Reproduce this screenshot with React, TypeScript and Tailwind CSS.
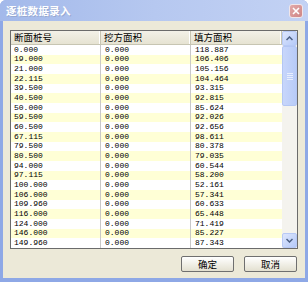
import React from 'react';

const rows: [string, string, string][] = [
  ['0.000', '0.000', '118.887'],
  ['19.000', '0.000', '106.406'],
  ['21.000', '0.000', '105.156'],
  ['22.115', '0.000', '104.464'],
  ['39.500', '0.000', '93.315'],
  ['40.500', '0.000', '92.815'],
  ['50.000', '0.000', '85.624'],
  ['59.500', '0.000', '92.026'],
  ['60.500', '0.000', '92.656'],
  ['67.115', '0.000', '98.611'],
  ['79.500', '0.000', '80.378'],
  ['80.500', '0.000', '79.035'],
  ['94.000', '0.000', '60.544'],
  ['97.115', '0.000', '58.200'],
  ['100.000', '0.000', '52.161'],
  ['106.000', '0.000', '57.341'],
  ['109.960', '0.000', '60.633'],
  ['116.000', '0.000', '65.448'],
  ['124.000', '0.000', '71.419'],
  ['146.000', '0.000', '85.227'],
  ['149.960', '0.000', '87.343'],
];

const cjk = "font-['SimSun','Noto_Sans_CJK_SC',sans-serif]";
const mono = "font-['Liberation_Mono',monospace]";

const HeaderCell = ({ label, w }: { label: string; w: string }) => (
  <div className={`${w} h-full flex items-center pl-[3px] border-r border-[#c7c5b2] shadow-[inset_-1px_0_0_#fff] text-[9.5px] text-black ${cjk}`}>
    {label}
  </div>
);

const ScrollBtn = ({ up }: { up?: boolean }) => (
  <div className="h-[15px] w-[15px] rounded-[2px] border border-[#b7c9f5] bg-gradient-to-br from-[#dde6fd] to-[#b5c9f8] flex items-center justify-center">
    <svg width="7" height="5" viewBox="0 0 7 5">
      <path d={up ? 'M0.5 4 L3.5 1 L6.5 4' : 'M0.5 1 L3.5 4 L6.5 1'} fill="none" stroke="#4d6185" strokeWidth="1.5" />
    </svg>
  </div>
);

const XpButton = ({ label }: { label: string }) => (
  <button className={`w-[53px] h-[16px] rounded-[2px] border border-[#6f6f6f] bg-gradient-to-b from-white to-[#e3e0d0] text-[9.5px] text-black flex items-center justify-center ${cjk}`}>
    {label}
  </button>
);

export default function App() {
  return (
    <div className="w-[308px] h-[282px] flex flex-col bg-[#8ea8e6] rounded-t-[6px] overflow-hidden">
      {/* title bar */}
      <div className="h-[21px] shrink-0 flex items-center justify-between pl-[6px] pr-[5px] bg-gradient-to-r from-[#a3b9ea] via-[#b6c8f0] to-[#c3d2f4]">
        <span className={`text-[10.5px] font-bold text-white tracking-[0.3px] [text-shadow:1px_1px_0_#97a9d2] ${cjk}`}>逐桩数据录入</span>
        <div className="w-[14px] h-[14px] rounded-[3px] border border-[#f0e6ea] bg-gradient-to-br from-[#e2a9a9] to-[#cf8686] flex items-center justify-center">
          <svg width="8" height="8" viewBox="0 0 8 8">
            <path d="M1 1 L7 7 M7 1 L1 7" stroke="#fff" strokeWidth="1.6" />
          </svg>
        </div>
      </div>

      {/* body */}
      <div className="flex-1 mx-[3px] mb-[4px] bg-[#ece9d8] flex flex-col pt-[9px] px-[7px]">
        <div className="h-[219px] flex border border-[#6b6b6b] bg-white">
          <div className="flex-1 flex flex-col">
            <div className="h-[14px] shrink-0 flex bg-gradient-to-b from-[#f3f1e8] to-[#e6e3d2] border-b border-[#c7c5b2]">
              <HeaderCell label="断面桩号" w="w-[90px]" />
              <HeaderCell label="挖方面积" w="w-[90px]" />
              <HeaderCell label="填方面积" w="w-[91px]" />
            </div>
            <div className="flex-1 grid grid-rows-[repeat(21,minmax(0,1fr))]">
              {rows.map((r, i) => (
                <div key={i} className={`flex text-[8px] leading-none text-black ${mono} ${i % 2 ? 'bg-[#ffffd6]' : 'bg-white'}`}>
                  <div className="w-[90px] flex items-center pl-[3px] border-r border-[#c8c8c8]">{r[0]}</div>
                  <div className="w-[90px] flex items-center pl-[4px] border-r border-[#c8c8c8]">{r[1]}</div>
                  <div className="w-[91px] flex items-center pl-[4px]">{r[2]}</div>
                </div>
              ))}
            </div>
          </div>

          {/* scrollbar */}
          <div className="w-[15px] shrink-0 flex flex-col bg-[#f4f3ee]">
            <ScrollBtn up />
            <div className="flex-1 flex flex-col">
              <div className="h-[60px] rounded-[2px] border border-[#b3c6f4] bg-gradient-to-r from-[#c8d6fb] to-[#b8cbf8] flex flex-col items-center justify-center gap-[1px]">
                <div className="w-[6px] h-[1px] bg-[#e8eefd]" />
                <div className="w-[6px] h-[1px] bg-[#e8eefd]" />
                <div className="w-[6px] h-[1px] bg-[#e8eefd]" />
                <div className="w-[6px] h-[1px] bg-[#e8eefd]" />
              </div>
            </div>
            <ScrollBtn />
          </div>
        </div>

        <div className="flex justify-end gap-[10px] mt-[7px] pr-[1px]">
          <XpButton label="确定" />
          <XpButton label="取消" />
        </div>
      </div>
    </div>
  );
}
